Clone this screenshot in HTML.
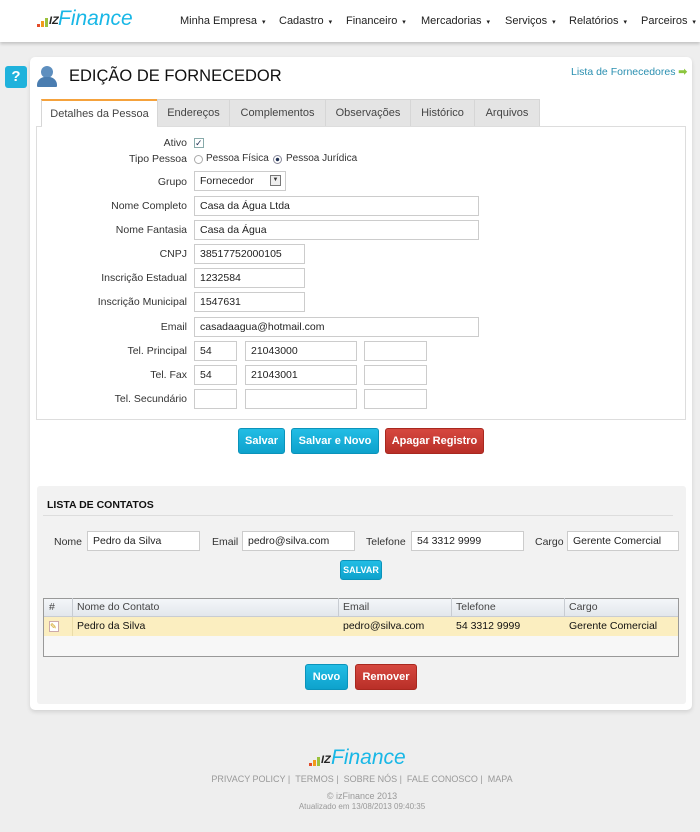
<!DOCTYPE html>
<html><head><meta charset="utf-8"><style>
*{box-sizing:border-box;margin:0;padding:0}
body{width:700px;height:832px;background:#eeeeee;font-family:"Liberation Sans",sans-serif;font-size:10.5px;color:#333;position:relative;overflow:hidden}
.a{position:absolute;white-space:nowrap}
.hdr{left:0;top:0;width:700px;height:42px;background:#fff;box-shadow:0 2px 3px rgba(0,0,0,.18)}
.nav{top:15px;font-size:11px;color:#222;white-space:nowrap}
.nav span:after{content:" \25BE";font-size:7px;margin-left:3px}
.logo{font-style:italic;color:#18b7e6;font-size:21px;font-family:"Liberation Sans",sans-serif}
.card{left:30px;top:57px;width:662px;height:653px;background:#fff;border-radius:5px;box-shadow:0 2px 4px rgba(0,0,0,.12)}
.tab{top:99px;height:28px;background:#e4e4e4;border:1px solid #d6d6d6;border-bottom:none;font-size:11px;color:#444;text-align:center;line-height:27px}
.panel{left:36px;top:126px;width:650px;height:294px;border:1px solid #ddd;background:#fff}
.lbl{width:120px;text-align:right;color:#333}
.in{height:20px;border:1px solid #ccc;background:#fff;line-height:18px;padding-left:5px;color:#222}
.btn{height:26px;border-radius:3px;color:#fff;font-weight:bold;font-size:11px;text-align:center;line-height:25px}
.blue{background:linear-gradient(#22bde5,#0ea2cc);border:1px solid #0b93ba}
.red{background:linear-gradient(#d6483f,#b92f28);border:1px solid #a8281f}
.th{top:598px;height:19px;line-height:19px;padding-left:5px;border-right:1px solid #c8ccd2;color:#444}
.td{top:617px;height:19px;line-height:19px;padding-left:5px;color:#111}
</style></head><body>
<div class="a hdr"></div>
<div class="a" style="left:37px;top:14px;width:24px;height:14px">
 <div class="a" style="left:0;top:10px;width:3px;height:3px;background:#e34b2a"></div>
 <div class="a" style="left:4px;top:7px;width:3px;height:6px;background:#f29a1c"></div>
 <div class="a" style="left:8px;top:4px;width:3px;height:9px;background:#9bc13c"></div>
 <div class="a" style="left:12px;top:1px;font-size:11px;font-weight:bold;font-style:italic;color:#222;line-height:12px">IZ</div>
</div>
<div class="a logo" style="left:58px;top:7px">Finance</div>
<div class="a nav" style="left:180px"><span>Minha Empresa</span></div>
<div class="a nav" style="left:279px"><span>Cadastro</span></div>
<div class="a nav" style="left:346px"><span>Financeiro</span></div>
<div class="a nav" style="left:421px"><span>Mercadorias</span></div>
<div class="a nav" style="left:505px"><span>Serviços</span></div>
<div class="a nav" style="left:569px"><span>Relatórios</span></div>
<div class="a nav" style="left:641px"><span>Parceiros</span></div>

<div class="a card"></div>
<div class="a" style="left:5px;top:66px;width:22px;height:22px;background:#1fb2dc;border-radius:3px;color:#fff;font-weight:bold;font-size:15px;text-align:center;line-height:22px">?</div>
<div class="a" style="left:41px;top:66px;width:12px;height:12px;border-radius:6px;background:#5e8fbf"></div>
<div class="a" style="left:37px;top:77px;width:20px;height:10px;border-radius:8px 8px 1px 1px;background:#4a7db0"></div>
<div class="a" style="left:69px;top:67px;font-size:16.5px;color:#111">EDIÇÃO DE FORNECEDOR</div>
<div class="a" style="left:571px;top:66px;font-size:10.5px;color:#2a8fb0">Lista de Fornecedores <span style="color:#8cc63e;font-weight:bold">➡</span></div>

<div class="a tab" style="left:41px;width:117px;background:#fff;border-top:2px solid #f5a23c;height:29px">Detalhes da Pessoa</div>
<div class="a tab" style="left:157px;width:73px">Endereços</div>
<div class="a tab" style="left:229px;width:97px">Complementos</div>
<div class="a tab" style="left:325px;width:86px">Observações</div>
<div class="a tab" style="left:410px;width:65px">Histórico</div>
<div class="a tab" style="left:474px;width:66px">Arquivos</div>
<div class="a panel"></div>
<div class="a" style="left:42px;top:126px;width:115px;height:2px;background:#fff"></div>

<div class="a lbl" style="left:67px;top:137px">Ativo</div>
<div class="a" style="left:194px;top:138px;width:10px;height:10px;border:1px solid #8aa;font-size:9px;line-height:8px;color:#235">✓</div>
<div class="a lbl" style="left:67px;top:153px">Tipo Pessoa</div>
<div class="a" style="left:194px;top:155px;width:9px;height:9px;border:1px solid #aaa;border-radius:5px"></div>
<div class="a" style="left:206px;top:153px;font-size:10px">Pessoa Física</div>
<div class="a" style="left:273px;top:155px;width:9px;height:9px;border:1px solid #889;border-radius:5px;background:radial-gradient(#235 30%,#fff 40%)"></div>
<div class="a" style="left:286px;top:153px;font-size:10px">Pessoa Jurídica</div>
<div class="a lbl" style="left:67px;top:176px">Grupo</div>
<div class="a in" style="left:194px;top:171px;width:92px">Fornecedor</div>
<div class="a" style="left:270px;top:175px;width:11px;height:11px;border:1px solid #777;background:#eee;font-size:6px;text-align:center;line-height:9px">▼</div>

<div class="a lbl" style="left:67px;top:200px">Nome Completo</div><div class="a in" style="left:194px;top:196px;width:285px">Casa da Água Ltda</div>
<div class="a lbl" style="left:67px;top:224px">Nome Fantasia</div><div class="a in" style="left:194px;top:220px;width:285px">Casa da Água</div>
<div class="a lbl" style="left:67px;top:248px">CNPJ</div><div class="a in" style="left:194px;top:244px;width:111px">38517752000105</div>
<div class="a lbl" style="left:67px;top:272px">Inscrição Estadual</div><div class="a in" style="left:194px;top:268px;width:111px">1232584</div>
<div class="a lbl" style="left:67px;top:296px">Inscrição Municipal</div><div class="a in" style="left:194px;top:292px;width:111px">1547631</div>
<div class="a lbl" style="left:67px;top:321px">Email</div><div class="a in" style="left:194px;top:317px;width:285px">casadaagua@hotmail.com</div>
<div class="a lbl" style="left:67px;top:345px">Tel. Principal</div>
<div class="a in" style="left:194px;top:341px;width:43px">54</div><div class="a in" style="left:245px;top:341px;width:112px">21043000</div><div class="a in" style="left:364px;top:341px;width:63px"></div>
<div class="a lbl" style="left:67px;top:369px">Tel. Fax</div>
<div class="a in" style="left:194px;top:365px;width:43px">54</div><div class="a in" style="left:245px;top:365px;width:112px">21043001</div><div class="a in" style="left:364px;top:365px;width:63px"></div>
<div class="a lbl" style="left:67px;top:393px">Tel. Secundário</div>
<div class="a in" style="left:194px;top:389px;width:43px"></div><div class="a in" style="left:245px;top:389px;width:112px"></div><div class="a in" style="left:364px;top:389px;width:63px"></div>

<div class="a btn blue" style="left:238px;top:428px;width:47px">Salvar</div>
<div class="a btn blue" style="left:291px;top:428px;width:88px">Salvar e Novo</div>
<div class="a btn red" style="left:385px;top:428px;width:99px">Apagar Registro</div>

<div class="a" style="left:37px;top:486px;width:649px;height:218px;background:#f2f2f2;border-radius:3px"></div>
<div class="a" style="left:47px;top:499px;font-weight:bold;font-size:10.5px;color:#111">LISTA DE CONTATOS</div>
<div class="a" style="left:43px;top:515px;width:630px;height:1px;background:#ddd"></div>
<div class="a" style="left:54px;top:536px">Nome</div><div class="a in" style="left:87px;top:531px;width:113px">Pedro da Silva</div>
<div class="a" style="left:212px;top:536px">Email</div><div class="a in" style="left:242px;top:531px;width:113px">pedro@silva.com</div>
<div class="a" style="left:366px;top:536px">Telefone</div><div class="a in" style="left:411px;top:531px;width:113px">54 3312 9999</div>
<div class="a" style="left:535px;top:536px">Cargo</div><div class="a in" style="left:567px;top:531px;width:112px">Gerente Comercial</div>
<div class="a btn blue" style="left:340px;top:560px;width:42px;height:20px;line-height:18px;font-size:9px">SALVAR</div>

<div class="a" style="left:43px;top:598px;width:636px;height:59px;border:1px solid #999;background:#f7f7f7"></div>
<div class="a" style="left:44px;top:599px;width:634px;height:18px;background:linear-gradient(#f4f6f9,#e3e7ec);border-bottom:1px solid #c8ccd2"></div>
<div class="a" style="left:44px;top:617px;width:634px;height:19px;background:#fbeec0"></div>
<div class="a th" style="left:44px;width:29px">#</div>
<div class="a th" style="left:72px;width:267px">Nome do Contato</div>
<div class="a th" style="left:338px;width:114px">Email</div>
<div class="a th" style="left:451px;width:114px">Telefone</div>
<div class="a th" style="left:564px;width:114px;border-right:none">Cargo</div>
<div class="a" style="left:49px;top:621px;width:10px;height:11px;background:#fff;border:1px solid #caa;font-size:8px;line-height:9px;color:#c90">✎</div>
<div class="a" style="left:72px;top:617px;width:1px;height:19px;background:#eadca8"></div>
<div class="a td" style="left:72px">Pedro da Silva</div>
<div class="a td" style="left:338px">pedro@silva.com</div>
<div class="a td" style="left:451px">54 3312 9999</div>
<div class="a td" style="left:564px">Gerente Comercial</div>

<div class="a btn blue" style="left:305px;top:664px;width:43px">Novo</div>
<div class="a btn red" style="left:355px;top:664px;width:62px">Remover</div>

<div class="a" style="left:309px;top:753px;width:24px;height:14px">
 <div class="a" style="left:0;top:10px;width:3px;height:3px;background:#e34b2a"></div>
 <div class="a" style="left:4px;top:7px;width:3px;height:6px;background:#f29a1c"></div>
 <div class="a" style="left:8px;top:4px;width:3px;height:9px;background:#9bc13c"></div>
 <div class="a" style="left:12px;top:1px;font-size:11px;font-weight:bold;font-style:italic;color:#222;line-height:12px">IZ</div>
</div>
<div class="a logo" style="left:331px;top:746px">Finance</div>
<div class="a" style="left:0;top:774px;width:724px;text-align:center;font-size:9px;color:#999">PRIVACY POLICY | &nbsp;TERMOS | &nbsp;SOBRE NÓS | &nbsp;FALE CONOSCO | &nbsp;MAPA</div>
<div class="a" style="left:0;top:791px;width:724px;text-align:center;font-size:9px;color:#999">© izFinance 2013</div>
<div class="a" style="left:0;top:802px;width:724px;text-align:center;font-size:8px;color:#999">Atualizado em 13/08/2013 09:40:35</div>
</body></html>
